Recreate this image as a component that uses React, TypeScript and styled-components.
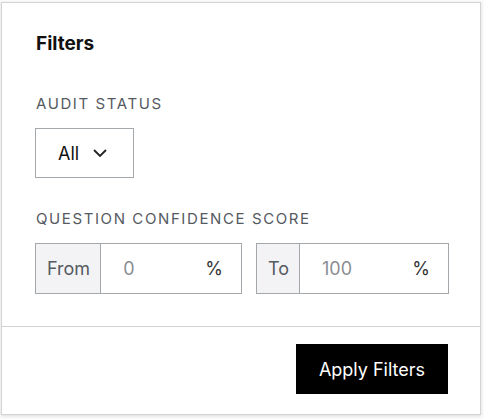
import { createGlobalStyle } from "styled-components";
import styled from "styled-components";

const GlobalStyle = createGlobalStyle`
  body {
    margin: 0;
    background: #ffffff;
    font-family: Inter, "Liberation Sans", sans-serif;
  }
`;

const Page = styled.div`
  width: 484px;
  height: 419px;
  position: relative;
  overflow: hidden;
  background: #fafafa;
`;

const Panel = styled.div`
  position: absolute;
  left: 1px;
  top: 2px;
  width: 480px;
  height: 413px;
  box-sizing: border-box;
  background: #fff;
  border: 1px solid #d2d4d6;
  box-shadow: 0 1px 3px rgba(0, 0, 0, 0.12);
  display: flex;
  flex-direction: column;
`;

const Body = styled.div`
  padding: 29px 31px 32px 33px;
  border-bottom: 1px solid #cfd3d6;
`;

const Title = styled.h2`
  margin: 0 0 0 1px;
  font-size: 19px;
  line-height: 24px;
  font-weight: 700;
  color: #111;
`;

const Label = styled.div<{ $top: number }>`
  margin: ${(p) => p.$top}px 0 14px 1px;
  font-size: 15px;
  line-height: 20px;
  letter-spacing: 1.6px;
  color: #555a5f;
  text-transform: uppercase;
`;

const Select = styled.button`
  display: flex;
  align-items: center;
  gap: 14px;
  width: 99px;
  height: 50px;
  box-sizing: border-box;
  padding: 0 0 0 22px;
  background: #fff;
  border: 1px solid #a3a8ad;
  font-family: inherit;
  font-size: 18px;
  color: #111;
  cursor: pointer;
`;

const RangeRow = styled.div`
  display: flex;
  gap: 14px;
  margin-top: 2px;
`;

const RangeGroup = styled.div<{ $width: number }>`
  display: flex;
  width: ${(p) => p.$width}px;
  height: 51px;
  box-sizing: border-box;
  border: 1px solid #a3a8ad;
`;

const Prefix = styled.span`
  display: flex;
  align-items: center;
  padding: 0 10px 0 11px;
  background: #f3f3f6;
  border-right: 1px solid #a3a8ad;
  font-size: 18px;
  color: #555a5f;
`;

const Field = styled.div`
  flex: 1;
  display: flex;
  align-items: center;
  justify-content: space-between;
  padding: 0 18px 0 22px;
  font-size: 18px;
`;

const Value = styled.span`
  color: #8a8e92;
`;

const Unit = styled.span`
  color: #333;
`;

const Footer = styled.div`
  display: flex;
  justify-content: flex-end;
  padding: 17px 32px 0 0;
`;

const ApplyButton = styled.button`
  width: 152px;
  height: 50px;
  background: #000;
  color: #fff;
  border: none;
  font-family: inherit;
  font-size: 18px;
  cursor: pointer;
`;

const Chevron = () => (
  <svg width="14" height="8" viewBox="0 0 14 8" fill="none">
    <path d="M1 1l6 6 6-6" stroke="#222" strokeWidth="1.8" />
  </svg>
);

export default function App() {
  return (
    <Page>
      <GlobalStyle />
      <Panel>
        <Body>
          <Title>Filters</Title>
          <Label $top={38}>Audit Status</Label>
          <Select>
            All <Chevron />
          </Select>
          <Label $top={31}>Question Confidence Score</Label>
          <RangeRow>
            <RangeGroup $width={207}>
              <Prefix>From</Prefix>
              <Field>
                <Value>0</Value>
                <Unit>%</Unit>
              </Field>
            </RangeGroup>
            <RangeGroup $width={193}>
              <Prefix>To</Prefix>
              <Field>
                <Value>100</Value>
                <Unit>%</Unit>
              </Field>
            </RangeGroup>
          </RangeRow>
        </Body>
        <Footer>
          <ApplyButton>Apply Filters</ApplyButton>
        </Footer>
      </Panel>
    </Page>
  );
}
